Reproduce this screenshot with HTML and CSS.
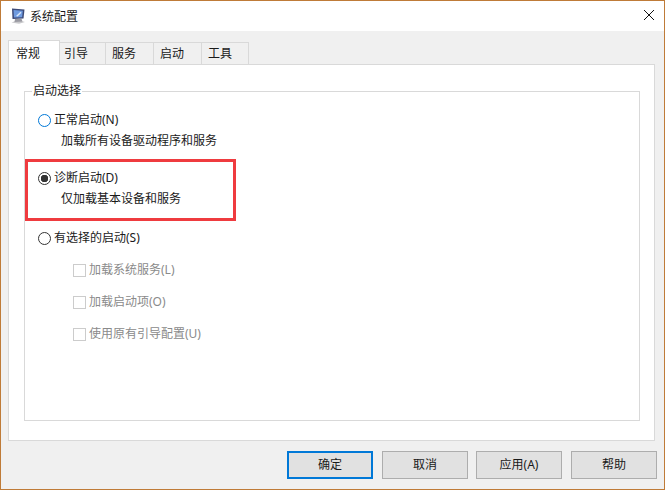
FILE: index.html
```html
<!DOCTYPE html>
<html lang="zh-CN">
<head>
    <meta charset="UTF-8">
    <title>系统配置</title>
    <link rel="stylesheet" href="styles.css">
</head>
<body>
<div class="window">
    <header class="titlebar">
        <svg class="app-icon" width="16" height="16" viewBox="0 0 16 16">
            <path d="M1.5 14.5 L8 12 L15 14 L9 15.8 Z" fill="#c9c9cc"/>
            <path d="M2 0.5 L14.5 1.5 L13.5 10.5 L2.5 11 Z" fill="#3d4a78"/>
            <path d="M3.5 2 L12.8 2.8 L12.2 9.2 L4 9.6 Z" fill="#6f9be0"/>
            <path d="M6 8 L10.5 3.8 L11.5 4.8 L7.5 8.5 Z" fill="#dbe8fa"/>
            <path d="M5 11 L11.5 10.8 L12.5 13.5 L4.5 14 Z" fill="#9a9aa2"/>
        </svg>
        <span class="title">系统配置</span>
        <svg class="close" width="10" height="10" viewBox="0 0 10 10">
            <path d="M0 0 L10 10 M10 0 L0 10" stroke="#111" stroke-width="1" fill="none"/>
        </svg>
    </header>
    <div class="content">
        <ul class="tabs">
            <li class="tab active">常规</li>
            <li class="tab w45">引导</li>
            <li class="tab">服务</li>
            <li class="tab">启动</li>
            <li class="tab w47">工具</li>
        </ul>
        <section class="panel">
            <fieldset class="group">
                <legend>启动选择</legend>
                <div class="row first"><span class="radio blue"></span>正常启动(N)</div>
                <div class="desc">加载所有设备驱动程序和服务</div>
                <div class="row second"><span class="radio checked"></span>诊断启动(D)</div>
                <div class="desc">仅加载基本设备和服务</div>
                <div class="row third"><span class="radio"></span>有选择的启动(S)</div>
                <div class="check"><span class="box"></span>加载系统服务(L)</div>
                <div class="check"><span class="box"></span>加载启动项(O)</div>
                <div class="check"><span class="box"></span>使用原有引导配置(U)</div>
                <div class="mark"></div>
            </fieldset>
        </section>
        <footer class="buttons">
            <button class="btn default">确定</button>
            <button class="btn">取消</button>
            <button class="btn apply">应用(A)</button>
            <button class="btn">帮助</button>
        </footer>
    </div>
</div>
</body>
</html>
```

FILE: styles.css
```css
* {
    box-sizing: border-box;
}

body {
    margin: 0;
    font-family: "Noto Sans", "Noto Sans CJK SC", sans-serif;
    font-size: 12px;
    line-height: 16px;
    color: #1a1a1a;
    background-color: #fff;
}

.window {
    display: flex;
    flex-direction: column;
    width: 665px;
    height: 490px;
    border: 1px solid #bf7b38;
}

.titlebar {
    display: flex;
    align-items: center;
    height: 30px;
    padding: 0 10px 0 9px;
    background-color: #fff;
}

.app-icon {
    margin-right: 4px;
}

.title {
    flex: 1;
    padding-top: 2px;
}

.close {
    margin-bottom: 2px;
}

.content {
    flex: 1;
    padding: 9px 7px 9px 7px;
    background-color: #f0f0f0;
}

.tabs {
    display: flex;
    align-items: flex-end;
    height: 24px;
    margin: 0;
    padding: 0;
    list-style: none;
}

.tab {
    width: 48px;
    height: 22px;
    padding-left: 6px;
    line-height: 22px;
    border: 1px solid #d9d9d9;
    border-left: 0;
    border-bottom: 0;
    background-color: #f0f0f0;
}

.tab.w45 {
    width: 46px;
    padding-left: 4px;
}

.tab.w47 {
    width: 47px;
}

.tab.active {
    position: relative;
    width: 52px;
    height: 25px;
    margin-bottom: -1px;
    padding-left: 7px;
    border-left: 1px solid #d9d9d9;
    line-height: 25px;
    background-color: #fff;
}

.panel {
    width: 647px;
    height: 377px;
    padding: 18px 14px 18px 15px;
    border: 1px solid #d9d9d9;
    background-color: #fff;
}

.group {
    position: relative;
    height: 338px;
    margin: 0;
    padding: 13px 0 0 13px;
    border: 1px solid #d9d9d9;
}

.group legend {
    margin-left: -6px;
    padding: 0 0 0 1px;
    width: 50px;
}

.row {
    display: flex;
    align-items: center;
    height: 16px;
}

.row.second {
    margin-top: 21px;
}

.row.third {
    margin-top: 23px;
}

.desc {
    margin: 5px 0 0 23px;
    height: 16px;
}

.radio {
    width: 13px;
    height: 13px;
    margin-right: 3px;
    border: 1px solid #333;
    border-radius: 50%;
    background-color: #fff;
}

.radio.blue {
    border-color: #0078d7;
}

.radio.checked {
    border-color: #333;
    background: radial-gradient(circle, #333 0 3.5px, #fff 4px);
}

.check {
    display: flex;
    align-items: center;
    height: 16px;
    margin: 16px 0 0 35px;
    color: #8a8a8a;
}

.check + .check {
    margin-top: 16px;
}

.box {
    width: 13px;
    height: 13px;
    margin-right: 3px;
    border: 1px solid #ccc;
    background-color: #fff;
}

.mark {
    position: absolute;
    left: 0;
    top: 60px;
    width: 211px;
    height: 62px;
    border: 3px solid #ef3b3f;
}

.buttons {
    display: flex;
    justify-content: flex-end;
    gap: 9px;
    margin-top: 10px;
}

.btn {
    width: 86px;
    height: 28px;
    padding: 0;
    font: inherit;
    color: #1a1a1a;
    border: 1px solid #adadad;
    background-color: #e1e1e1;
}

.btn.default {
    border: 2px solid #0078d7;
}

.btn.apply {
    margin-left: -1px;
}
```
